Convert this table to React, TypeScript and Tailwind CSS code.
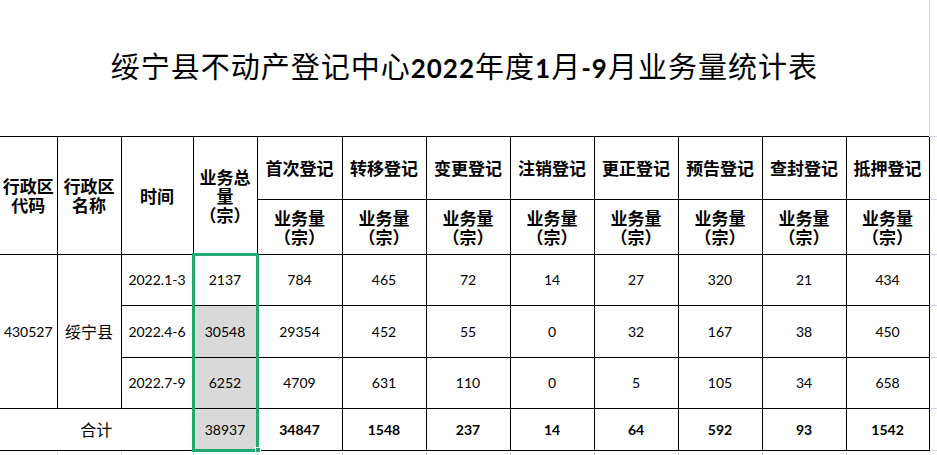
import React from 'react'

const colWidths = [57, 64, 72, 64, 85, 84, 84, 84, 84, 84, 84, 83, 40]

const categories = ['首次登记', '转移登记', '变更登记', '注销登记', '更正登记', '预告登记', '查封登记', '抵押登记']

const rows = [
  { time: '2022.1-3', total: '2137', values: ['784', '465', '72', '14', '27', '320', '21', '434'], h: 'h-[51px]' },
  { time: '2022.4-6', total: '30548', values: ['29354', '452', '55', '0', '32', '167', '38', '450'], h: 'h-[52px]' },
  { time: '2022.7-9', total: '6252', values: ['4709', '631', '110', '0', '5', '105', '34', '658'], h: 'h-[51px]' },
]

const sums = ['34847', '1548', '237', '14', '64', '592', '93', '1542']

const cjk = { fontFamily: '"Noto Sans CJK SC", sans-serif' }
const num = { fontFamily: 'Lato, "Noto Sans CJK SC", sans-serif' }

const cell = 'border border-black p-0 text-center align-middle'
const grid = 'border border-[#d0d7e5] p-0'

export default function App() {
  return (
    <div className="relative h-[455px] w-[937px] overflow-hidden bg-white text-black">
      <table className="table-fixed border-collapse" style={{ width: colWidths.reduce((a, b) => a + b, 0) }}>
        <colgroup>
          {colWidths.map((w, i) => (
            <col key={i} style={{ width: w }} />
          ))}
        </colgroup>
        <tbody>
          <tr className="h-[136px]">
            <td colSpan={12} className="p-0 text-center align-middle">
              <span className="text-[29px] leading-none tracking-[1px]" style={cjk}>
                绥宁县不动产登记中心
                <b className="text-[26px]" style={num}>2022</b>
                年度
                <b className="text-[26px]" style={num}>1</b>
                月
                <b className="text-[26px]" style={num}>-9</b>
                月业务量统计表
              </span>
            </td>
            <td className="border-l border-[#d0d7e5] p-0" />
          </tr>

          <tr className="h-[63px] text-[17px] font-bold leading-[19px]" style={cjk}>
            <td rowSpan={2} className={`${cell} border-l-0`}>
              行政区
              <br />
              代码
            </td>
            <td rowSpan={2} className={cell}>
              行政区
              <br />
              名称
            </td>
            <td rowSpan={2} className={cell}>
              时间
            </td>
            <td rowSpan={2} className={cell}>
              业务总
              <br />量<br />
              （宗）
            </td>
            {categories.map((c) => (
              <td key={c} className={cell}>
                {c}
              </td>
            ))}
            <td className={grid} />
          </tr>

          <tr className="h-[55px] text-[17px] font-bold leading-[19px]" style={cjk}>
            {categories.map((c) => (
              <td key={c} className={cell}>
                业务量
                <br />
                （宗）
              </td>
            ))}
            <td className={grid} />
          </tr>

          {rows.map((r, i) => (
            <tr key={r.time} className={`${r.h} text-[14px]`} style={num}>
              {i === 0 && (
                <>
                  <td rowSpan={3} className={`${cell} border-l-0`}>
                    430527
                  </td>
                  <td rowSpan={3} className={`${cell} text-[16px]`} style={cjk}>
                    绥宁县
                  </td>
                </>
              )}
              <td className={cell}>{r.time}</td>
              <td className={`${cell} ${i === 0 ? '' : 'bg-[#d9d9d9]'}`}>{r.total}</td>
              {r.values.map((v, j) => (
                <td key={j} className={cell}>
                  {v}
                </td>
              ))}
              <td className={grid} />
            </tr>
          ))}

          <tr className="h-[42px] text-[14px]" style={num}>
            <td colSpan={3} className={`${cell} border-l-0 text-[16px]`} style={cjk}>
              合计
            </td>
            <td className={`${cell} bg-[#d9d9d9]`}>38937</td>
            {sums.map((s, j) => (
              <td key={j} className={`${cell} font-bold`}>
                {s}
              </td>
            ))}
            <td className={grid} />
          </tr>

          <tr className="h-[20px]">
            {colWidths.map((_, i) => (
              <td key={i} className={`${grid} ${i === 0 ? 'border-l-0' : ''}`} />
            ))}
          </tr>
        </tbody>
      </table>

      {/* selection box over the 业务总量 column */}
      <div className="pointer-events-none absolute left-[192px] top-[253px] h-[199px] w-[67px] border-[3px] border-[#21a86c]" />
      <div className="pointer-events-none absolute left-[255px] top-[447px] h-[6px] w-[6px] border border-white bg-[#21a86c]" />
    </div>
  )
}
